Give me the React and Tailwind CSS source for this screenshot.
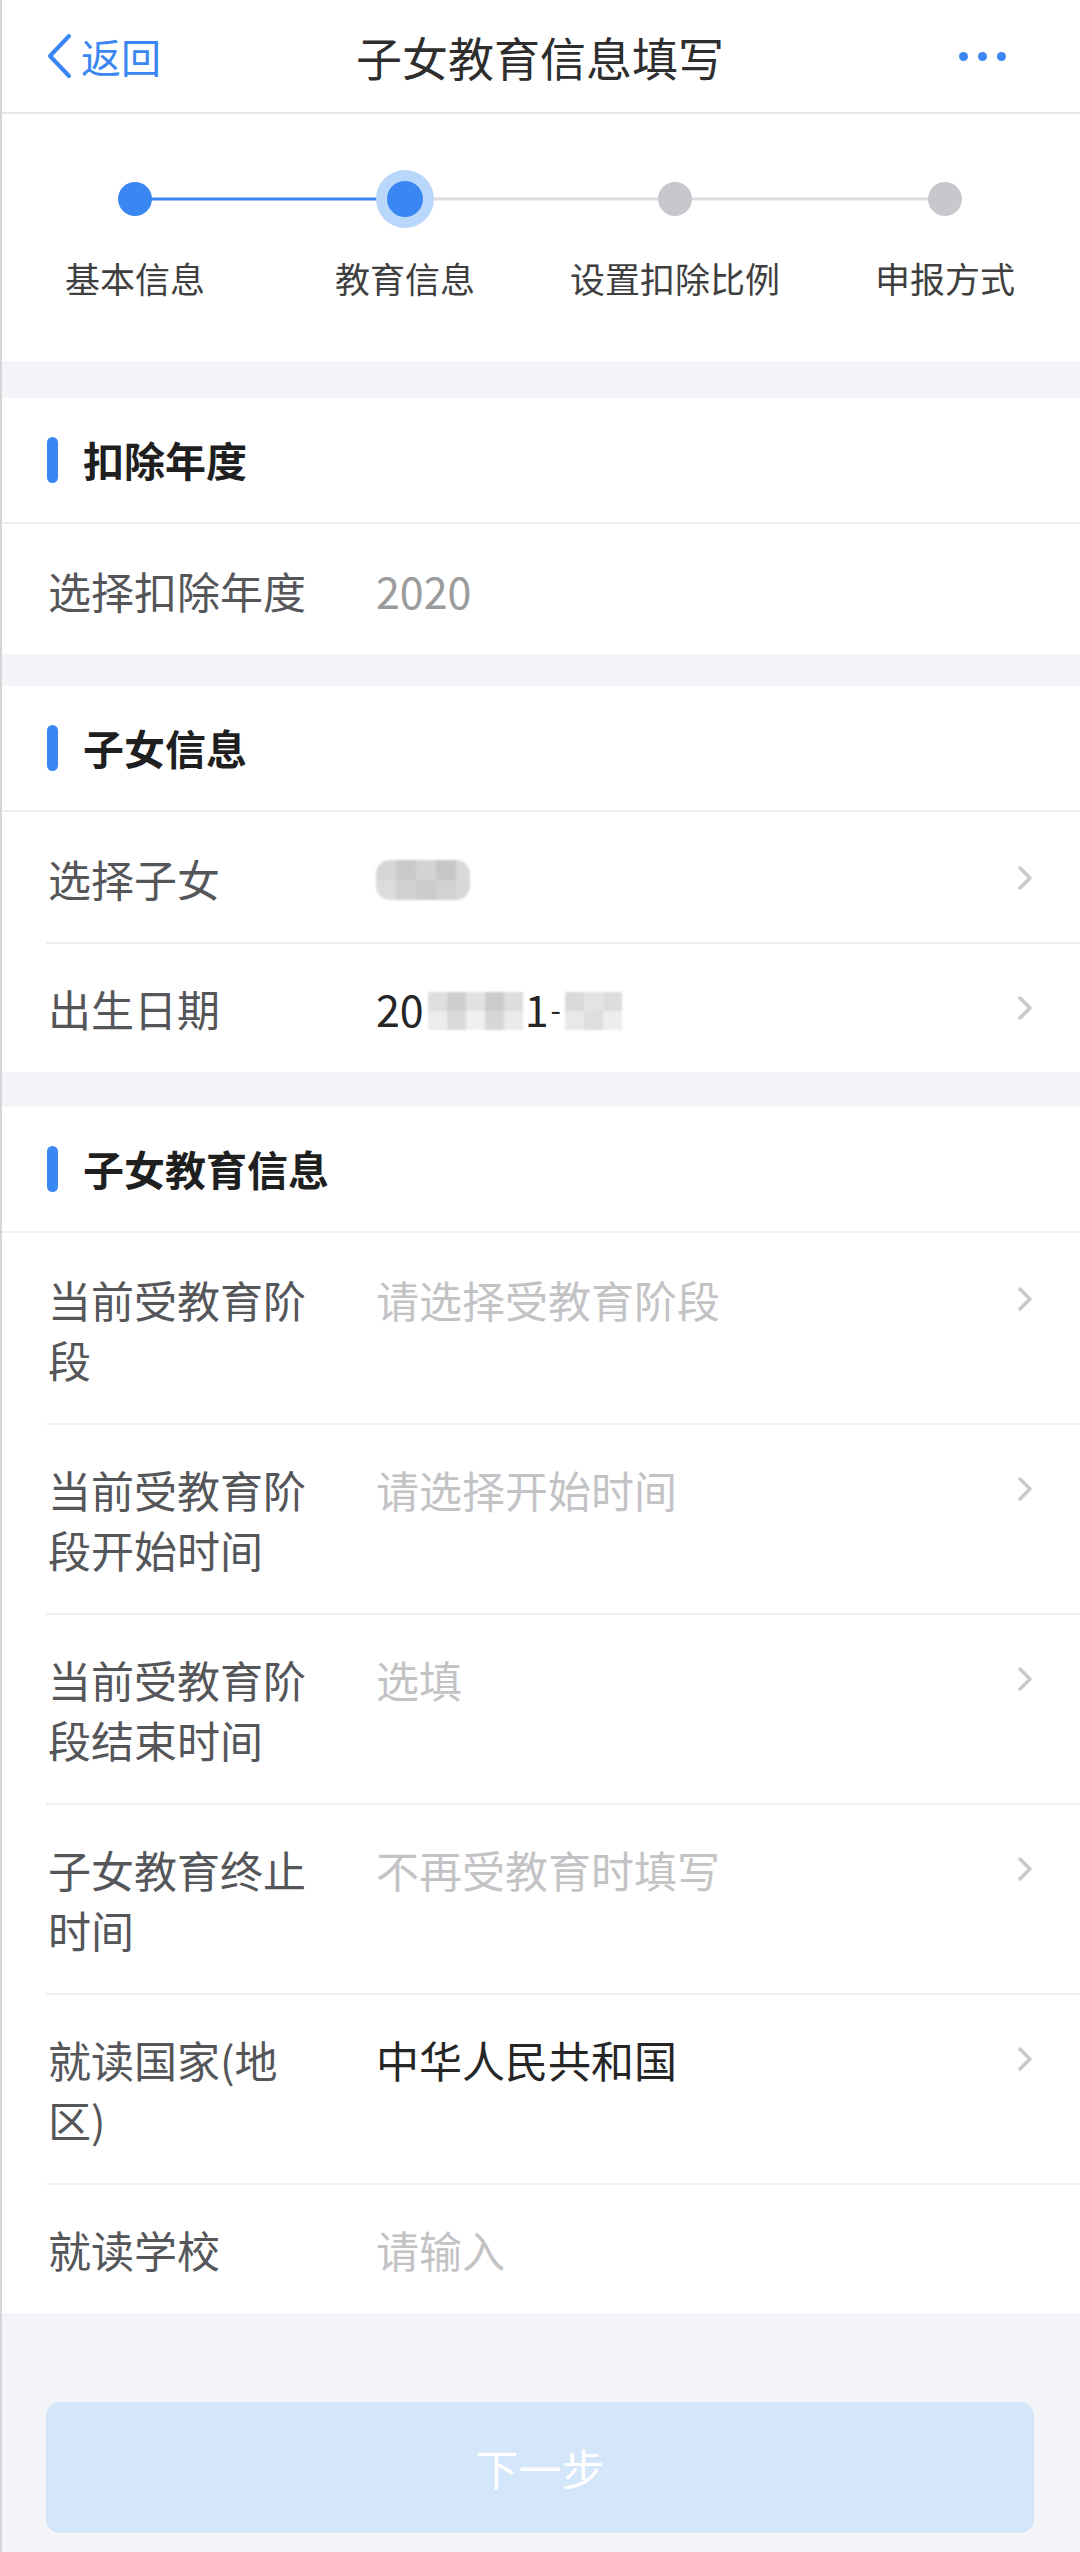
// 子女教育信息填写 — mobile form page, 1080px wide.

const BLUE = "#3a86f2";

function Chevron() {
  return (
    <svg width="18" height="28" viewBox="0 0 18 28" className="shrink-0">
      <path d="M4 4 L14 14 L4 24" fill="none" stroke="#c9c9c9" strokeWidth="3.5" strokeLinecap="round" strokeLinejoin="round" />
    </svg>
  );
}

function Mosaic({ cols, rows, cell = 19, className = "" }) {
  return (
    <div className={`grid overflow-hidden blur-[1px] ${className}`} style={{ gridTemplateColumns: `repeat(${cols}, ${cell}px)` }}>
      {rows.flat().map((c, i) => (
        <div key={i} style={{ background: c, height: cell }} />
      ))}
    </div>
  );
}

function SectionHeader({ title }) {
  return (
    <div className="flex h-[126px] items-center border-b-2 border-[#efefef] pl-[47px]">
      <span className="h-[46px] w-[11px] rounded-full" style={{ background: BLUE }} />
      <span className="ml-[25px] text-[41px] font-bold text-[#1f1f1f]">{title}</span>
    </div>
  );
}

function Row({ label, value, tone = "placeholder", arrow = true, first = false }) {
  const valueColor = {
    placeholder: "text-[#c3c3c6]",
    muted: "text-[#9b9b9b]",
    dark: "text-[#262626]",
  }[tone];
  return (
    <div className={`ml-[46px] flex border-t-2 py-[34px] pr-[46px] text-[43px] leading-[60px] ${first ? "border-transparent" : "border-[#efefef]"}`}>
      <div className="w-[266px] shrink-0 pl-[2px] text-[#555659]">{label}</div>
      <div className={`ml-[64px] flex-1 ${valueColor}`}>{value}</div>
      {arrow && (
        <div className="flex h-[60px] items-center">
          <Chevron />
        </div>
      )}
    </div>
  );
}

const steps = [
  { label: "基本信息", state: "done" },
  { label: "教育信息", state: "active" },
  { label: "设置扣除比例", state: "todo" },
  { label: "申报方式", state: "todo" },
];

function Stepper() {
  return (
    <div className="h-[247px] bg-white pt-[56px]">
      <div className="grid grid-cols-4">
        {steps.map((s, i) => (
          <div key={s.label} className="flex flex-col items-center">
            <div className="relative flex h-[58px] w-full items-center justify-center">
              {i < steps.length - 1 && (
                <div
                  className={`absolute left-1/2 top-1/2 h-[3px] w-full -translate-y-1/2 ${i === 0 ? "bg-[#3a86f2]" : "bg-[#dcdcde]"}`}
                />
              )}
              {s.state === "active" ? (
                <div className="relative flex h-[58px] w-[58px] items-center justify-center rounded-full bg-[#b9d6fb]">
                  <div className="h-[36px] w-[36px] rounded-full" style={{ background: BLUE }} />
                </div>
              ) : (
                <div
                  className={`relative h-[34px] w-[34px] rounded-full ${s.state === "done" ? "bg-[#3a86f2]" : "bg-[#c7c8cd]"}`}
                />
              )}
            </div>
            <div className="mt-[26px] text-[35px] leading-[48px] text-[#3f3f3f]">{s.label}</div>
          </div>
        ))}
      </div>
    </div>
  );
}

export default function App() {
  const childName = (
    <div className="relative mt-[12px] h-[40px] w-[94px]">
      <Mosaic
        cols={5}
        cell={20}
        className="rounded-[14px]"
        rows={[
          ["#d6d6d6", "#c9c9c9", "#d4d4d4", "#c6c6c6", "#d9d9d9"],
          ["#dcdcdc", "#d0d0d0", "#cbcbcb", "#d2d2d2", "#d8d8d8"],
        ]}
      />
    </div>
  );

  const birthday = (
    <div className="flex items-center text-[#262626]">
      <span>20</span>
      <Mosaic
        cols={5}
        rows={[
          ["#dedede", "#cfcfcf", "#e2e2e2", "#cbcbcb", "#dddddd"],
          ["#ececec", "#dadada", "#efefef", "#d6d6d6", "#eaeaea"],
        ]}
        className="ml-[4px] mt-[6px]"
      />
      <span className="ml-[2px]">1</span>
      <span className="ml-[2px] text-[30px]">-</span>
      <Mosaic
        cols={3}
        rows={[
          ["#d9d9d9", "#e3e3e3", "#dcdcdc"],
          ["#e8e8e8", "#dedede", "#ededed"],
        ]}
        className="ml-[4px] mt-[6px]"
      />
    </div>
  );

  return (
    <div className="relative min-h-[2552px] w-[1080px] bg-[#f4f5f8] font-['Noto_Sans_CJK_SC','Noto_Sans',sans-serif]">
      {/* top bar */}
      <div className="grid h-[114px] grid-cols-[1fr_auto_1fr] items-center border-b-2 border-[#e8e8e8] bg-white">
        <div className="flex items-center pl-[45px]" style={{ color: BLUE }}>
          <svg width="28" height="46" viewBox="0 0 28 46">
            <path d="M24 3 L5 23 L24 43" fill="none" stroke={BLUE} strokeWidth="4" strokeLinecap="round" strokeLinejoin="round" />
          </svg>
          <span className="ml-[8px] text-[40px] leading-none">返回</span>
        </div>
        <div className="text-[46px] leading-none text-[#2e2e2e]">子女教育信息填写</div>
        <div className="flex justify-end gap-[10px] pr-[74px]">
          <span className="h-[9px] w-[9px] rounded-full" style={{ background: BLUE }} />
          <span className="h-[9px] w-[9px] rounded-full" style={{ background: BLUE }} />
          <span className="h-[9px] w-[9px] rounded-full" style={{ background: BLUE }} />
        </div>
      </div>

      <Stepper />

      <div className="h-[37px]" />
      <div className="bg-white">
        <SectionHeader title="扣除年度" />
        <Row first label="选择扣除年度" value="2020" tone="muted" arrow={false} />
      </div>

      <div className="h-[32px]" />
      <div className="bg-white">
        <SectionHeader title="子女信息" />
        <Row first label="选择子女" value={childName} />
        <Row label="出生日期" value={birthday} />
      </div>

      <div className="h-[35px]" />
      <div className="bg-white">
        <SectionHeader title="子女教育信息" />
        <Row first label="当前受教育阶段" value="请选择受教育阶段" />
        <Row label="当前受教育阶段开始时间" value="请选择开始时间" />
        <Row label="当前受教育阶段结束时间" value="选填" />
        <Row label="子女教育终止时间" value="不再受教育时填写" />
        <Row label="就读国家(地区)" value="中华人民共和国" tone="dark" />
        <Row label="就读学校" value="请输入" arrow={false} />
      </div>

      <div className="px-[46px] pt-[89px]">
        <button className="flex h-[131px] w-full items-center justify-center rounded-[14px] bg-[#d3e6fa] text-[43px] text-white">
          下一步
        </button>
      </div>

      <div className="absolute inset-y-0 left-0 w-[2px] bg-[#d6d6d6]" />
    </div>
  );
}
